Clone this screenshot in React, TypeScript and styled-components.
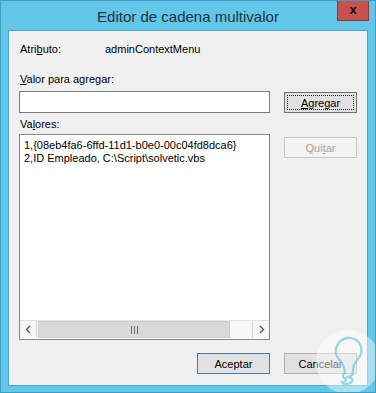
import styled, { createGlobalStyle } from "styled-components";

const Global = createGlobalStyle`
  html, body {
    margin: 0;
    padding: 0;
    background: #62c6e8;
  }
  * { box-sizing: border-box; }
`;

const Window = styled.div`
  position: relative;
  width: 376px;
  height: 393px;
  background: #62c6e8;
  border: 1px solid #3f9fc2;
  display: flex;
  flex-direction: column;
  font-family: "Liberation Sans", Arial, sans-serif;
  font-size: 11px;
  color: #000;
  overflow: hidden;
`;

const TitleBar = styled.div`
  height: 29px;
  display: flex;
  align-items: center;
  justify-content: center;
  position: relative;
`;

const Title = styled.div`
  font-size: 15px;
  color: #1b3440;
  padding-top: 2px;
`;

const CloseBtn = styled.div`
  position: absolute;
  top: -1px;
  right: 6px;
  width: 32px;
  height: 21px;
  background: #c9504b;
  border: 1px solid #8e3b38;
  border-top: none;
  display: flex;
  align-items: center;
  justify-content: center;
  font-weight: bold;
  font-size: 13px;
  color: #111;
  line-height: 1;
  padding-bottom: 2px;
`;

const Panel = styled.div`
  flex: 1;
  margin: 0 7px 6px 7px;
  background: #f0f0f0;
  border: 1px solid #4ba7c8;
  padding: 10px 10px 0 10px;
  display: flex;
  flex-direction: column;
`;

const Row = styled.div<{ $top?: number }>`
  display: flex;
  align-items: flex-start;
  margin-top: ${(p) => p.$top ?? 0}px;
`;

const Label = styled.div<{ $width?: number }>`
  height: 15px;
  line-height: 15px;
  margin-left: 1px;
  width: ${(p) => (p.$width ? `${p.$width}px` : "auto")};
  white-space: nowrap;
`;

const TextInput = styled.div`
  width: 251px;
  height: 22px;
  background: #fff;
  border: 1px solid #7a7a7a;
`;

const Button = styled.div<{ $variant?: "focus" | "default" | "disabled" }>`
  width: 73px;
  height: 21px;
  margin-left: 14px;
  margin-top: ${(p) => (p.$variant === "focus" ? 1 : 0)}px;
  display: flex;
  align-items: center;
  justify-content: center;
  position: relative;
  background: ${(p) => (p.$variant === "disabled" ? "#f4f4f4" : "#e1e1e1")};
  color: ${(p) => (p.$variant === "disabled" ? "#a2a2a2" : "#000")};
  border: 1px solid
    ${(p) =>
      p.$variant === "disabled"
        ? "#c6c6c6"
        : p.$variant === "default"
        ? "#3c7fb1"
        : p.$variant === "focus"
        ? "#6f6f6f"
        : "#adadad"};
  ${(p) =>
    p.$variant === "focus" &&
    `
    &::after {
      content: "";
      position: absolute;
      inset: 2px;
      border: 1px dotted #222;
    }
  `}
`;

const U = styled.span`
  text-decoration: underline;
`;

const ListBox = styled.div`
  width: 251px;
  height: 206px;
  background: #fff;
  border: 1px solid #828790;
  display: flex;
  flex-direction: column;
`;

const ListItems = styled.div`
  flex: 1;
  padding: 4px 0 0 4px;
  line-height: 13px;
  white-space: nowrap;
`;

const HScroll = styled.div`
  height: 18px;
  margin: 0 0 1px 0;
  display: flex;
  background: #f7f7f7;
  border-top: 1px solid #e3e3e3;
`;

const Arrow = styled.div<{ $side: "left" | "right" }>`
  width: 17px;
  display: flex;
  align-items: center;
  justify-content: center;
  background: #f7f7f7;
  border-${(p) => (p.$side === "left" ? "right" : "left")}: 1px solid #d4d4d4;
  color: #606060;
`;

const Track = styled.div`
  flex: 1;
  display: flex;
`;

const Thumb = styled.div`
  width: 192px;
  margin-left: 1px;
  background: #d9d9d9;
  border: 1px solid #cdcdcd;
  display: flex;
  align-items: center;
  justify-content: center;
`;

const Footer = styled.div`
  display: flex;
  justify-content: flex-end;
  margin-top: 13px;
`;

const Watermark = styled.svg`
  position: absolute;
  left: 314px;
  top: 328px;
  pointer-events: none;
`;

function ArrowIcon({ dir }: { dir: "left" | "right" }) {
  return (
    <svg width="7" height="9" viewBox="0 0 7 9">
      <path
        d={dir === "left" ? "M5 1 L1.5 4.5 L5 8" : "M2 1 L5.5 4.5 L2 8"}
        fill="none"
        stroke="#555"
        strokeWidth="1.3"
      />
    </svg>
  );
}

function Grip() {
  return (
    <svg width="7" height="8" viewBox="0 0 7 8">
      <rect x="0" y="0" width="1" height="8" fill="#6b6b6b" />
      <rect x="3" y="0" width="1" height="8" fill="#6b6b6b" />
      <rect x="6" y="0" width="1" height="8" fill="#6b6b6b" />
    </svg>
  );
}

export default function App() {
  return (
    <>
      <Global />
      <Window>
        <TitleBar>
          <Title>Editor de cadena multivalor</Title>
          <CloseBtn>x</CloseBtn>
        </TitleBar>
        <Panel>
          <Row $top={1}>
            <Label $width={84}>
              Atri<U>b</U>uto:
            </Label>
            <Label>adminContextMenu</Label>
          </Row>
          <Row $top={15}>
            <Label>
              <U>V</U>alor para agregar:
            </Label>
          </Row>
          <Row $top={4}>
            <TextInput />
            <Button $variant="focus">
              <U>A</U>gregar
            </Button>
          </Row>
          <Row $top={4}>
            <Label>
              Va<U>l</U>ores:
            </Label>
          </Row>
          <Row $top={2}>
            <ListBox>
              <ListItems>
                <div>1,{"{08eb4fa6-6ffd-11d1-b0e0-00c04fd8dca6}"}</div>
                <div>2,ID Empleado, C:\Script\solvetic.vbs</div>
              </ListItems>
              <HScroll>
                <Arrow $side="left">
                  <ArrowIcon dir="left" />
                </Arrow>
                <Track>
                  <Thumb>
                    <Grip />
                  </Thumb>
                </Track>
                <Arrow $side="right">
                  <ArrowIcon dir="right" />
                </Arrow>
              </HScroll>
            </ListBox>
            <div style={{ marginTop: 3 }}>
              <Button $variant="disabled">
                Qui<U>t</U>ar
              </Button>
            </div>
          </Row>
          <Footer>
            <Button $variant="default">Aceptar</Button>
            <Button>Cancelar</Button>
          </Footer>
        </Panel>
        <Watermark width="66" height="66" viewBox="0 0 66 66">
          <circle cx="33" cy="33" r="32" fill="#ffffff" fillOpacity="0.45" />
          <path
            d="M24 30 C16 22 24 8 35 9 C46 10 50 22 43 30 C40 34 38 36 38 40 L38 44 C38 47 35 47 33 48 C38 49 39 52 35 54 C31 56 28 55 27 53 C31 53 33 51 29 49 C27 47 28 45 30 44 C30 40 28 35 24 30 Z"
            fill="none"
            stroke="#7cc9e2"
            strokeWidth="2.2"
            strokeOpacity="0.8"
          />
        </Watermark>
      </Window>
    </>
  );
}
